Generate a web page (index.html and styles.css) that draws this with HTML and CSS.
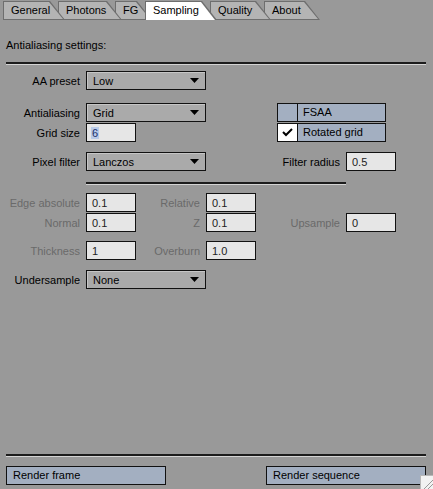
FILE: index.html
```html
<!DOCTYPE html>
<html lang="en">
<head>
  <meta charset="UTF-8">
  <meta name="viewport" content="width=device-width, initial-scale=1">
  <link rel="stylesheet" href="styles.css">
</head>
<body>

<!-- Tab strip -->
<div class="tabs">
  <span class="tab tab-general">General</span>
  <span class="tab tab-photons">Photons</span>
  <span class="tab tab-fg">FG</span>
  <span class="tab tab-sampling active">Sampling</span>
  <span class="tab tab-quality">Quality</span>
  <span class="tab tab-about">About</span>
</div>

<div class="heading">Antialiasing settings:</div>
<div class="sep"></div>

<div class="row row-preset">
  <span class="lbl">AA preset</span>
  <div class="select">Low<svg class="arrow" width="9" height="5" viewBox="0 0 9 5"><polygon points="0,0 9,0 4.5,5" fill="#000"/></svg></div>
</div>

<div class="row row-aa">
  <span class="lbl">Antialiasing</span>
  <div class="select">Grid<svg class="arrow" width="9" height="5" viewBox="0 0 9 5"><polygon points="0,0 9,0 4.5,5" fill="#000"/></svg></div>
  <div class="toggle toggle-fsaa">
    <span class="check"></span>
    <span class="toggle-text">FSAA</span>
  </div>
</div>

<div class="row row-grid">
  <span class="lbl">Grid size</span>
  <div class="field"><span class="selected">6</span></div>
  <div class="toggle toggle-rotated">
    <span class="check on"><svg width="19" height="17" viewBox="0 0 19 17"><polyline points="5,8 8,11 14,5" fill="none" stroke="#000" stroke-width="2"/></svg></span>
    <span class="toggle-text">Rotated grid</span>
  </div>
</div>

<div class="row row-filter">
  <span class="lbl">Pixel filter</span>
  <div class="select">Lanczos<svg class="arrow" width="9" height="5" viewBox="0 0 9 5"><polygon points="0,0 9,0 4.5,5" fill="#000"/></svg></div>
  <span class="lbl lbl-wide">Filter radius</span>
  <div class="field">0.5</div>
</div>

<div class="sep sep-short"></div>

<div class="row row-edge off">
  <span class="lbl">Edge absolute</span>
  <div class="field">0.1</div>
  <span class="lbl lbl-mid">Relative</span>
  <div class="field">0.1</div>
</div>

<div class="row row-normal off">
  <span class="lbl">Normal</span>
  <div class="field">0.1</div>
  <span class="lbl lbl-mid">Z</span>
  <div class="field">0.1</div>
  <span class="lbl lbl-right">Upsample</span>
  <div class="field">0</div>
</div>

<div class="row row-thick off">
  <span class="lbl">Thickness</span>
  <div class="field">1</div>
  <span class="lbl lbl-mid">Overburn</span>
  <div class="field">1.0</div>
</div>

<div class="row row-under">
  <span class="lbl">Undersample</span>
  <div class="select">None<svg class="arrow" width="9" height="5" viewBox="0 0 9 5"><polygon points="0,0 9,0 4.5,5" fill="#000"/></svg></div>
</div>

<!-- Render buttons -->
<div class="footer">
  <div class="sep"></div>
  <div class="buttons">
    <span class="btn">Render frame</span>
    <span class="btn">Render sequence</span>
  </div>
</div>

<svg class="grip" width="13" height="14" viewBox="0 0 13 14">
  <rect x="0.5" y="0.5" width="13" height="14" fill="#f2f2f2" stroke="#b8b8b8"/>
  <line x1="4" y1="14" x2="13" y2="5" stroke="#9a9a9a"/>
  <line x1="8" y1="14" x2="13" y2="9" stroke="#9a9a9a"/>
</svg>

</body>
</html>
```

FILE: styles.css
```css
* {
  box-sizing: border-box;
}

body {
  margin: 0;
  width: 433px;
  height: 489px;
  overflow: hidden;
  position: relative;
  display: flex;
  flex-direction: column;
  background: #999999;
  color: #000;
  font-family: "Liberation Sans", Arial, sans-serif;
  font-size: 11px;
}

/* Tabs */
.tabs {
  display: flex;
  height: 20px;
  padding: 1px 0 0 3px;
}

.tab {
  position: relative;
  flex: none;
  height: 19px;
  line-height: 18px;
  padding-left: 8px;
  margin-right: -7px;
  background: #6e6e6e;
  clip-path: polygon(0 0, calc(100% - 15px) 0, 100% 100%, 0 100%);
}

.tab::before {
  content: "";
  position: absolute;
  left: 1px;
  top: 1px;
  right: 2px;
  bottom: 1px;
  background: #b4b4b4;
  clip-path: polygon(0 0, calc(100% - 14px) 0, 100% 100%, 0 100%);
  z-index: -1;
}

.tab-general { width: 62px; z-index: 6; }
.tab-photons { width: 64px; z-index: 5; }
.tab-fg { width: 37px; z-index: 4; }
.tab-sampling { width: 72px; z-index: 3; }
.tab-quality { width: 61px; z-index: 2; }
.tab-about { width: 56px; z-index: 1; }

.tab.active {
  z-index: 10;
}

.tab.active::before {
  background: #ffffff;
  bottom: 0;
}

.heading {
  margin: 18px 0 0 6px;
  line-height: 14px;
}

.sep {
  height: 3px;
  margin: 10px 7px 0 6px;
  border-top: 2px solid #1c1c1c;
  border-bottom: 1px solid #d4d4d4;
}

.sep-short {
  width: 260px;
  margin: 11px 0 0 86px;
}

/* Rows */
.row {
  display: flex;
  align-items: center;
  gap: 6px;
  height: 19px;
}

.row-preset { margin-top: 6px; }
.row-aa { margin-top: 13px; }
.row-grid { margin-top: 1px; }
.row-filter { margin-top: 10px; }
.row-edge { margin-top: 8px; }
.row-normal { margin-top: 1px; }
.row-thick { margin-top: 9px; }
.row-under { margin-top: 10px; }

.lbl {
  flex: none;
  width: 80px;
  text-align: right;
  white-space: nowrap;
}

.lbl-mid {
  width: 58px;
}

.lbl-right {
  width: 78px;
}

.lbl-wide {
  width: 128px;
}

.off .lbl {
  color: #6a6a6a;
}

.select {
  flex: none;
  width: 120px;
  height: 19px;
  display: flex;
  align-items: center;
  justify-content: space-between;
  padding: 0 6px;
  border: 1px solid #111;
  background: #aaaaaa;
  box-shadow: inset 1px 1px 0 #c6c6c6;
}

.field {
  flex: none;
  width: 50px;
  height: 19px;
  display: flex;
  align-items: center;
  padding-left: 5px;
  border: 1px solid #111;
  background: #e6e6e6;
  color: #222;
}

.selected {
  background: #b9cbe8;
  color: #1a2f6a;
  padding: 0 1px;
  margin-left: -1px;
}

/* Check buttons */
.toggle {
  flex: none;
  width: 109px;
  height: 19px;
  display: flex;
  border: 1px solid #111;
  background: #a3afc1;
}

.toggle-fsaa {
  margin-left: 65px;
}

.toggle-rotated {
  margin-left: 135px;
}

.check {
  width: 20px;
  border-right: 1px solid #111;
}

.check.on {
  background: #ffffff;
}

.check svg {
  display: block;
}

.toggle-text {
  padding-left: 5px;
  line-height: 17px;
}

/* Footer */
.footer {
  margin-top: auto;
  padding-bottom: 4px;
}

.footer .sep {
  margin-top: 0;
}

.buttons {
  display: flex;
  justify-content: space-between;
  margin: 9px 7px 0 6px;
}

.btn {
  width: 160px;
  height: 19px;
  line-height: 17px;
  padding-left: 6px;
  border: 1px solid #111;
  background: #a3afc1;
}

.grip {
  position: absolute;
  right: 0;
  bottom: 0;
}
```
